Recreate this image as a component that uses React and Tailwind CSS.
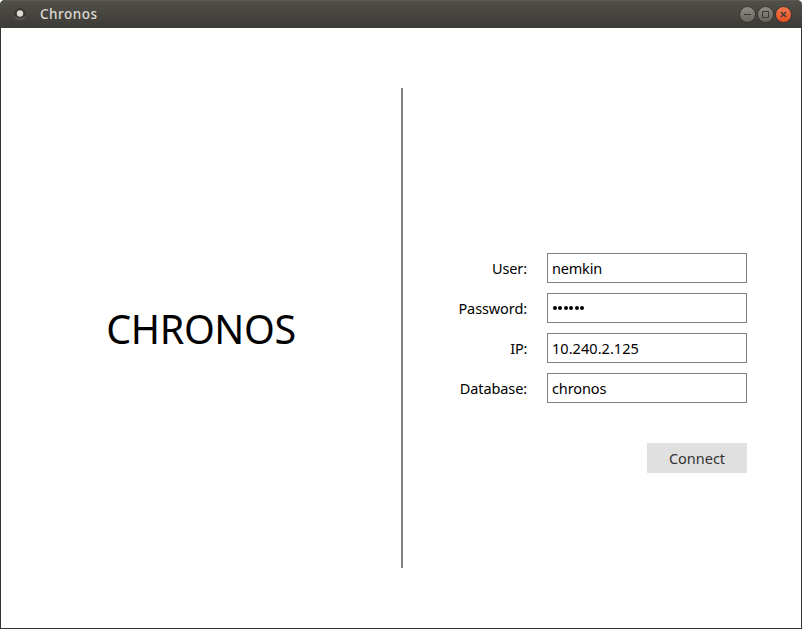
import React from "react";

const fields = [
  { label: "User:", value: "nemkin", type: "text", labelClass: "tracking-[-0.1px]", valueClass: "tracking-[-0.2px]" },
  { label: "Password:", value: "chrono", type: "password", labelClass: "tracking-[-0.1px]", valueClass: "" },
  { label: "IP:", value: "10.240.2.125", type: "text", labelClass: "tracking-[-0.3px]", valueClass: "tracking-[0.05px]" },
  { label: "Database:", value: "chronos", type: "text", labelClass: "tracking-[-0.1px]", valueClass: "tracking-[-0.1px]" },
];

function WindowButtons() {
  return (
    <svg className="mr-[9px] h-5 w-[54px]" viewBox="0 0 54 20">
      <defs>
        <linearGradient id="grey" x1="0" y1="0" x2="0" y2="1">
          <stop offset="0" stopColor="#8d8b83" />
          <stop offset="1" stopColor="#66645d" />
        </linearGradient>
        <linearGradient id="orange" x1="0" y1="0" x2="0" y2="1">
          <stop offset="0" stopColor="#f5784f" />
          <stop offset="1" stopColor="#e4501f" />
        </linearGradient>
      </defs>
      <g stroke="#33322e" strokeWidth="1">
        <circle cx="8.5" cy="10.5" r="8" fill="url(#grey)" />
        <circle cx="26.5" cy="10.5" r="8" fill="url(#grey)" />
        <circle cx="44.5" cy="10.5" r="8" fill="url(#orange)" />
      </g>
      <g fill="none" stroke="#3a3935">
        <path d="M5 10.5h7" />
        <path d="M23.5 7.5h6v6h-6z" />
        <path d="M42 8l5 5M47 8l-5 5" strokeWidth="1.4" />
      </g>
    </svg>
  );
}

function TitleBar() {
  return (
    <header className="flex h-7 shrink-0 items-center rounded-t-[5px] border-t border-[#5b5a53] bg-linear-to-b from-[#504f49] to-[#3c3b37] pb-px">
      <svg className="ml-[13px] h-4 w-4" viewBox="0 0 16 16">
        <circle cx="7" cy="7.5" r="5.5" fill="#383733" />
        <path d="M2.2 10.5a5.6 5.6 0 0 0 9.6 0" fill="none" stroke="#77756f" />
        <circle cx="7" cy="7.5" r="3.2" fill="#dfdbd2" />
      </svg>
      <span className="ml-[11px] flex-1 text-[13.5px] leading-5 font-medium tracking-[0.5px] text-[#dfdbd2]">Chronos</span>
      <WindowButtons />
    </header>
  );
}

export default function App() {
  return (
    <div className="flex h-[629px] w-[802px] flex-col rounded-t-[5px] bg-[#33322e] font-['Noto_Sans',sans-serif] text-[14.5px] text-black">
      <TitleBar />
      <main className="mx-px mb-px flex flex-1 bg-white">
        <section className="flex w-[400px] items-center justify-center pt-[3px]">
          <h1 className="text-[39.5px] tracking-[-0.4px]">CHRONOS</h1>
        </section>
        <div className="mt-[60px] h-[480px] w-0.5 bg-[#808080]" />
        <section className="flex flex-1 flex-col items-end pt-[225px] pr-[54px]">
          <form className="flex flex-col items-end gap-2.5">
            {fields.map((f) => (
              <label key={f.label} className="flex h-[30px] items-center gap-5">
                <span className={`pt-px ${f.labelClass}`}>{f.label}</span>
                {f.type === "password" ? (
                  <span className="flex h-[30px] w-[200px] items-center gap-[1.5px] border border-[#7f7f7f] px-[4.5px]">
                    {f.value.split("").map((c, i) => (
                      <i key={i} className="size-1 rounded-full bg-black" />
                    ))}
                  </span>
                ) : (
                  <input
                    className={`h-[30px] w-[200px] border border-[#7f7f7f] bg-white px-1 pb-px outline-none ${f.valueClass}`}
                    defaultValue={f.value}
                    spellCheck={false}
                  />
                )}
              </label>
            ))}
            <button type="button" className="mt-[30px] h-[30px] w-[100px] bg-[#e0e0e0] pt-px text-[#333333]">
              Connect
            </button>
          </form>
        </section>
      </main>
    </div>
  );
}
